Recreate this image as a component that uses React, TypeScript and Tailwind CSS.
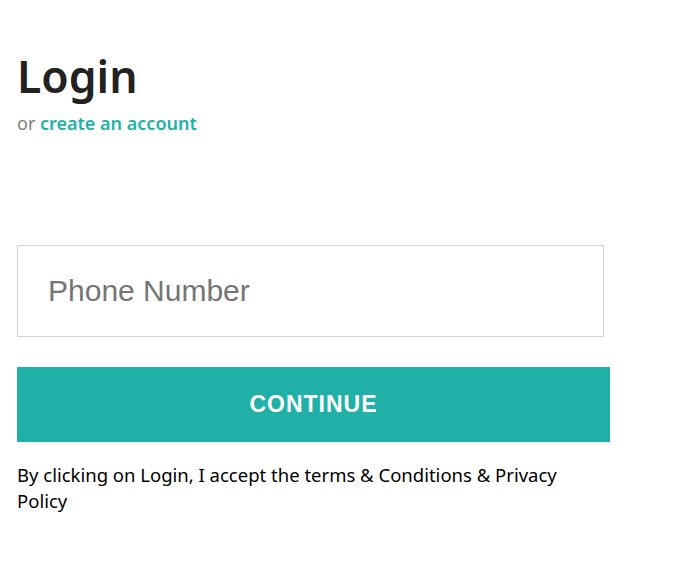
export default function App() {
  return (
    <div className="min-h-screen bg-white px-[17px] pt-[46px] font-['Noto_Sans',sans-serif]">
      <h1 className="text-[44.5px] font-semibold leading-[60px] text-[#222222]">
        Login
      </h1>
      <p className="mt-[5px] text-[18px] leading-[24px] text-[#808080]">
        or{" "}
        <a href="#" className="font-semibold text-[#20b2aa]">
          create an account
        </a>
      </p>

      <form className="mt-[110px] w-[593px]" onSubmit={(e) => e.preventDefault()}>
        <input
          type="tel"
          placeholder="Phone Number"
          className="block h-[92px] w-[587px] border border-[#d3d3d3] px-[30px] font-['Liberation_Sans',Arial,sans-serif] text-[30px] text-[#333] outline-none placeholder:text-[#757575]"
        />
        <button
          type="submit"
          className="mt-[30px] block h-[75px] w-full bg-[#20b0a8] font-['Liberation_Sans',Arial,sans-serif] text-[23px] font-bold tracking-[1px] text-white"
        >
          CONTINUE
        </button>
        <p className="mt-[20px] w-[575px] text-[18.5px] leading-[26px] text-black">
          By clicking on Login, I accept the terms &amp; Conditions &amp; Privacy
          Policy
        </p>
      </form>
    </div>
  );
}
